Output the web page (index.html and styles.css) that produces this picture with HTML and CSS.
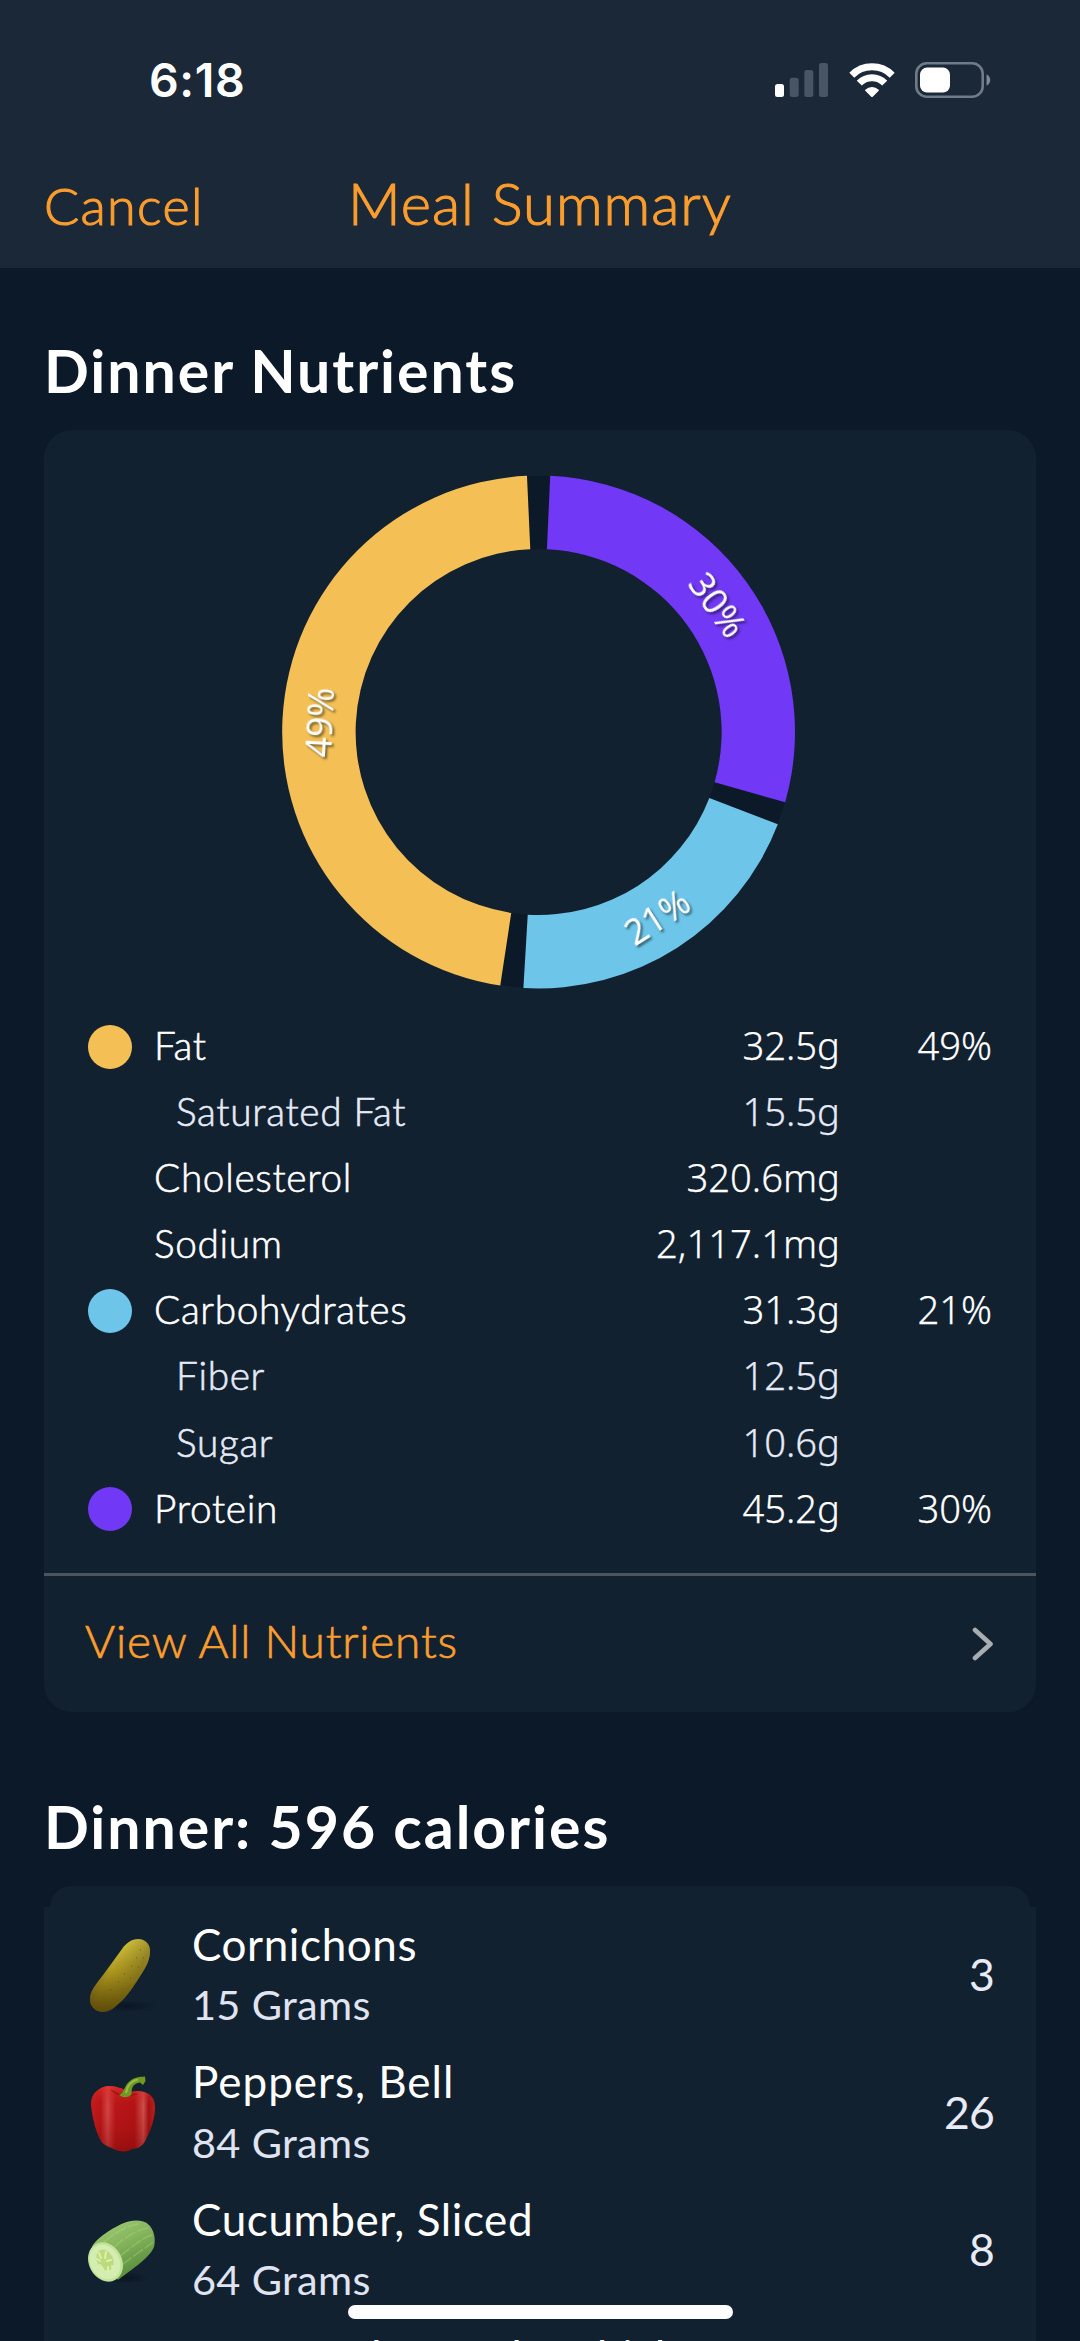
FILE: index.html
```html
<!DOCTYPE html>
<html lang="en">
<head>
<meta charset="utf-8">
<title>Meal Summary</title>
<link rel="stylesheet" href="styles.css">
</head>
<body>
<div class="screen">
  <header class="header">
    <div class="status">
      <span class="time">6:18</span>
      <div class="status-icons">
        <svg width="53" height="34" viewBox="0 0 53 34">
          <rect x="0" y="21" width="9" height="13" rx="2.5" fill="#fff"/>
          <rect x="14.7" y="14.7" width="9" height="19.3" rx="2.5" fill="#485663"/>
          <rect x="29.3" y="7" width="9" height="27" rx="2.5" fill="#485663"/>
          <rect x="44" y="0" width="9" height="34" rx="2.5" fill="#485663"/>
        </svg>
        <svg width="46" height="34" viewBox="0 0 46 34" fill="none" stroke="#fff" stroke-width="7">
          <path d="M2.8 12.2A28.5 28.5 0 0 1 43.2 12.2"/>
          <path d="M10.3 20.2A17.5 17.5 0 0 1 35.7 20.2"/>
          <path d="M23 33.5L16.8 27.2A9 9 0 0 1 29.2 27.2Z" fill="#fff" stroke="#fff" stroke-width="1.4" stroke-linejoin="round"/>
        </svg>
        <svg width="76" height="36" viewBox="0 0 76 36">
          <rect x="1.3" y="1.3" width="66.4" height="33.4" rx="10.5" fill="none" stroke="#6f7b88" stroke-width="2.6"/>
          <rect x="5" y="5.6" width="30" height="25" rx="7" fill="#fff"/>
          <path d="M71.5 12.5C76.5 14 76.5 22 71.5 23.500Z" fill="#7d8894"/>
        </svg>
      </div>
    </div>
    <nav class="nav">
      <a class="cancel">Cancel</a>
      <h1 class="title">Meal Summary</h1>
      <span></span>
    </nav>
  </header>

  <main class="content">
    <h2 class="section-title">Dinner Nutrients</h2>
    <section class="card">
      <svg class="donut" width="514" height="514" viewBox="-255.6 -257 514 514">
        <circle r="219.600" fill="none" stroke="#0c1928" stroke-width="73"/>
        <g id="segments"></g>
        <g class="donut-labels">
          <text transform="translate(178.9 -127.1) rotate(54.2)" y="13">30%</text>
          <text transform="translate(118.6 185) rotate(-32.8)" y="13">21%</text>
          <text transform="translate(-218.9 -9.600) rotate(-87)" y="13">49%</text>
        </g>
      </svg>
      <div class="nutrients">
        <div class="row"><i class="dot fat"></i><span>Fat</span><b>32.5g</b><em>49%</em></div>
        <div class="row sub"><i></i><span>Saturated Fat</span><b>15.5g</b><em></em></div>
        <div class="row"><i></i><span>Cholesterol</span><b>320.6mg</b><em></em></div>
        <div class="row"><i></i><span>Sodium</span><b>2,117.1mg</b><em></em></div>
        <div class="row"><i class="dot carbs"></i><span>Carbohydrates</span><b>31.3g</b><em>21%</em></div>
        <div class="row sub"><i></i><span>Fiber</span><b>12.5g</b><em></em></div>
        <div class="row sub"><i></i><span>Sugar</span><b>10.6g</b><em></em></div>
        <div class="row"><i class="dot protein"></i><span>Protein</span><b>45.2g</b><em>30%</em></div>
      </div>
      <a class="view-all">
        <span>View All Nutrients</span>
        <svg width="22" height="34" viewBox="0 0 22 34" fill="none" stroke="#a9adb1" stroke-width="4.600" stroke-linecap="round" stroke-linejoin="round"><path d="M3 3L18.500 17L3 31"/></svg>
      </a>
    </section>

    <h2 class="section-title second">Dinner: 596 calories</h2>
    <section class="foods">
      <div class="cap"></div>
      <ul class="food-list">
        <li class="food">
          <svg width="80" height="80" viewBox="0 0 80 80">
            <defs>
              <linearGradient id="pk" x1="0.75" y1="0" x2="0.3" y2="1"><stop offset="0" stop-color="#d8c640"/><stop offset=".5" stop-color="#b09a20"/><stop offset="1" stop-color="#68540a"/></linearGradient>
              <linearGradient id="ps" x1="0" y1="0" x2="1" y2=".6"><stop offset=".45" stop-color="#3a3004" stop-opacity="0"/><stop offset=".8" stop-color="#3a3004" stop-opacity=".4"/></linearGradient>
              <radialGradient id="sh"><stop offset="0" stop-color="#06101c" stop-opacity=".7"/><stop offset="1" stop-color="#06101c" stop-opacity="0"/></radialGradient>
            </defs>
            <ellipse cx="45" cy="70" rx="30" ry="6" fill="url(#sh)"/>
            <path d="M56 3C64 3 68 9 68 15C68 26 62 34 55 45C49 54 43 63 34 70C30 74 25 76 20 76C12 75 7 69 8 62C8 54 16 46 24 35C30 27 34 21 40 13C44 7 50 3 56 3Z" fill="url(#pk)"/>
            <path d="M56 3C64 3 68 9 68 15C68 26 62 34 55 45C49 54 43 63 34 70C30 74 25 76 20 76C12 75 7 69 8 62C8 54 16 46 24 35C30 27 34 21 40 13C44 7 50 3 56 3Z" fill="url(#ps)"/>
            <path d="M58 14h1M54 22h1M61 22h1M49 30h1M56 31h1M42 38h1M48 42h1M36 46h1M40 53h1M28 54h1M32 63h1M22 64h1" stroke="#5f5209" stroke-opacity=".5" stroke-width="1.500"/>
          </svg>
          <div class="food-text"><span class="name">Cornichons</span><span class="amount">15 Grams</span></div>
          <span class="cal">3</span>
        </li>
        <li class="food">
          <svg width="80" height="80" viewBox="0 0 80 80">
            <defs>
              <linearGradient id="pp" x1="0" y1="0" x2="1" y2="0"><stop offset="0" stop-color="#c31b1e"/><stop offset=".15" stop-color="#b81517"/><stop offset=".26" stop-color="#d64a48"/><stop offset=".38" stop-color="#b81618"/><stop offset=".68" stop-color="#b01214"/><stop offset=".82" stop-color="#cf5450"/><stop offset=".9" stop-color="#a01012"/><stop offset="1" stop-color="#b8201f"/></linearGradient>
              <linearGradient id="pd" x1="0" y1="0" x2="0" y2="1"><stop offset="0" stop-color="#e03230" stop-opacity=".75"/><stop offset=".3" stop-color="#c01818" stop-opacity=".1"/><stop offset="1" stop-color="#6e0606" stop-opacity=".45"/></linearGradient>
            </defs>
            <path d="M38 15C30 12 22 12 16 17C10 21 8 28 9.500 36C11 47 14 59 19 68C22 73 29 74 34 77C39 79 46 79 50 76C56 76 62 72 64 66C69 57 73 45 73 34C73 26 69 21 62 19C56 17 50 18 46 20C43 17 40 15 38 15Z" fill="url(#pp)"/>
            <path d="M38 15C30 12 22 12 16 17C10 21 8 28 9.500 36C11 47 14 59 19 68C22 73 29 74 34 77C39 79 46 79 50 76C56 76 62 72 64 66C69 57 73 45 73 34C73 26 69 21 62 19C56 17 50 18 46 20C43 17 40 15 38 15Z" fill="url(#pd)"/>
            <path d="M29 17C33 19 36 23 42 23C47 23 51 21 55 21" fill="none" stroke="#7c0a0c" stroke-opacity=".5" stroke-width="1.500"/>
            <path d="M37 22C42 21 42 12 48 8C52 4 58 4 63 3.500L63.500 8L61 12L58 9.500C54 10 51 12 50 16C49 19 50 21 49 22C45 25 41 25 37 22Z" fill="#6f9a22"/>
            <path d="M44 20C45 13 49 8 56 6.500" fill="none" stroke="#98bd45" stroke-width="2"/>
          </svg>
          <div class="food-text"><span class="name wide">Peppers, Bell</span><span class="amount">84 Grams</span></div>
          <span class="cal">26</span>
        </li>
        <li class="food">
          <svg width="80" height="80" viewBox="0 0 80 80">
            <defs>
              <linearGradient id="cb" x1=".3" y1=".1" x2=".7" y2=".9"><stop offset="0" stop-color="#98c46c"/><stop offset=".45" stop-color="#7fb058"/><stop offset="1" stop-color="#568a3a"/></linearGradient>
            </defs>
            <ellipse cx="44" cy="68" rx="24" ry="6" fill="url(#sh)"/>
            <path d="M10 37C14 28 32 17 42 13C49 10 61 9 67 15C72 20 74 29 72 37C68 48 46 62 36 70Z" fill="url(#cb)"/>
            <path d="M22 32C34 22 46 15 58 14M32 37C42 28 54 20 66 18M38 46C48 38 62 27 70 25M40 55C52 45 64 38 71 32" fill="none" stroke="#b4d98a" stroke-opacity=".35" stroke-width="1.500" stroke-dasharray="12 2"/>
            <ellipse cx="23.500" cy="52" rx="16.500" ry="20.500" transform="rotate(-28 23.500 52)" fill="#c3e29a"/>
            <ellipse cx="23" cy="52" rx="14.500" ry="18" transform="rotate(-28 23 52)" fill="#d4edb0"/>
            <ellipse cx="23" cy="50" rx="8" ry="11" transform="rotate(-28 23 50)" fill="#bcda80"/>
            <path d="M17 43l2 5M24 42l-1 6M29 50l-4 1M18 55l3 4M26 57l0 5M30 56l1 4M15 49l3 2" stroke="#dff0a8" stroke-width="2" stroke-linecap="round"/>
          </svg>
          <div class="food-text"><span class="name">Cucumber, Sliced</span><span class="amount">64 Grams</span></div>
          <span class="cal">8</span>
        </li>
        <li class="food">
          <svg width="80" height="80" viewBox="0 0 80 80"></svg>
          <div class="food-text"><span class="name">Seasoned or Soda, Chicken, Gravy</span></div>
        </li>
      </ul>
    </section>
  </main>
  <div class="home-indicator"></div>
</div>
<script>
// Segments: start and end angle in degrees clockwise from the top.
const segments = [[2.6, 105.9, '#7138f5'], [111.1, 183.4, '#6dc6ea'], [188.6, 357.400, '#f4c056']];
const pt = (r, a) => (r * Math.sin(a * Math.PI / 180)).toFixed(2) + ' ' + (-r * Math.cos(a * Math.PI / 180)).toFixed(2);
document.getElementById('segments').innerHTML = segments.map(([a, b, color]) =>
  `<path fill="${color}" d="M${pt(256.4, a)}A256.4 256.4 0 0 1 ${pt(256.4, b)}L${pt(183, b)}A183 183 0 0 0 ${pt(183, a)}Z"/>`).join('');
</script>
</body>
</html>
```
FILE: styles.css
```css
* { box-sizing: border-box; }

body {
  margin: 0;
  background: #0c1928;
  color: #fff;
  font-family: Lato, "Open Sans", sans-serif;
}

h1, h2, ul { margin: 0; padding: 0; font-weight: inherit; }

.screen {
  position: relative;
  width: 1080px;
  height: 2341px;
  overflow: hidden;
}

.header {
  height: 268px;
  background: #1a2837;
}

.status {
  display: flex;
  align-items: center;
  justify-content: space-between;
  height: 160px;
  padding: 0 89px 0 149px;
}

.time {
  font-family: Inter, sans-serif;
  font-size: 46.5px;
  font-weight: 600;
  line-height: 161px;
  letter-spacing: 0.6px;
}

.status-icons {
  display: flex;
  align-items: center;
  gap: 20.5px;
}

.nav {
  display: grid;
  grid-template-columns: 1fr auto 1fr;
  align-items: baseline;
  padding: 0 44px;
  color: #fb9d2d;
  font-weight: 300;
  line-height: 86px;
  -webkit-text-stroke: 1.1px currentColor;
}

.cancel { font-size: 52px; letter-spacing: 1.4px; }

.title { font-size: 58px; letter-spacing: 1px; }

.content { padding: 0 44px; }

.section-title {
  padding-top: 48px;
  margin: 0 0 4px 0;
  font-size: 59px;
  font-weight: 700;
  line-height: 110px;
  letter-spacing: 1.95px;
}

.section-title.second { padding-top: 60px; }

.card {
  height: 1282px;
  padding-top: 45px;
  border-radius: 28px;
  background: #122130;
}

.donut {
  display: block;
  margin: 0 auto;
  overflow: visible;
}

.donut-labels {
  fill: #fff;
  font-family: "Noto Sans", sans-serif;
  font-size: 35.5px;
  text-anchor: middle;
  filter: drop-shadow(2px 2px 1px rgba(0, 0, 0, 0.5));
}

.nutrients {
  padding: 22px 44px 33px;
  border-bottom: 3px solid #4c555d;
}

.row {
  display: grid;
  grid-template-columns: 44px 1fr auto 152px;
  height: 66.1px;
  font-size: 38.8px;
  font-weight: 300;
  line-height: 68px;
  -webkit-text-stroke: 0.6px currentColor;
}

.row span { padding-left: 22px; letter-spacing: 0.65px; }

.row.sub { color: #e6eaf6; }

.row.sub span { padding-left: 44px; }

.row b, .row em {
  font-family: "Noto Sans", sans-serif;
  font-size: 38.2px;
  font-style: normal;
  font-weight: 300;
  text-align: right;
  -webkit-text-stroke: 0.25px currentColor;
}

.dot {
  width: 44px;
  height: 44px;
  margin-top: 13.5px;
  border-radius: 50%;
}

.fat { background: #f4c056; }
.carbs { background: #6dc6ea; }
.protein { background: #7138f5; }

.view-all {
  display: flex;
  align-items: center;
  justify-content: space-between;
  height: 136px;
  padding: 0 42px 0 41px;
  color: #fb9d2d;
  font-size: 46px;
  font-weight: 300;
  letter-spacing: 0.8px;
  -webkit-text-stroke: 0.7px currentColor;
}

.view-all span { padding-bottom: 6px; }

.cap {
  height: 21px;
  margin: 0 6px;
  border-radius: 24px 24px 0 0;
  background: #122130;
}

.food-list {
  list-style: none;
  background: #122130;
}

.food {
  display: flex;
  align-items: center;
  height: 137.4px;
  padding: 0 42px 0 38px;
}

.food-text {
  display: flex;
  flex: 1;
  flex-direction: column;
  height: 123.4px;
  padding-left: 30px;
  line-height: 60.4px;
  white-space: nowrap;
}

.name { font-size: 44px; letter-spacing: 0.6px; }

.name.wide { letter-spacing: 1px; }

.amount { color: #e0e4f1; font-size: 41.5px; letter-spacing: 0.3px; }

.cal {
  padding-bottom: 4px;
  color: #e8ebf6;
  font-size: 44.5px;
  letter-spacing: -0.8px;
}

.home-indicator {
  position: absolute;
  bottom: 22px;
  left: 348px;
  width: 385px;
  height: 14px;
  border-radius: 7px;
  background: #fff;
}
```
